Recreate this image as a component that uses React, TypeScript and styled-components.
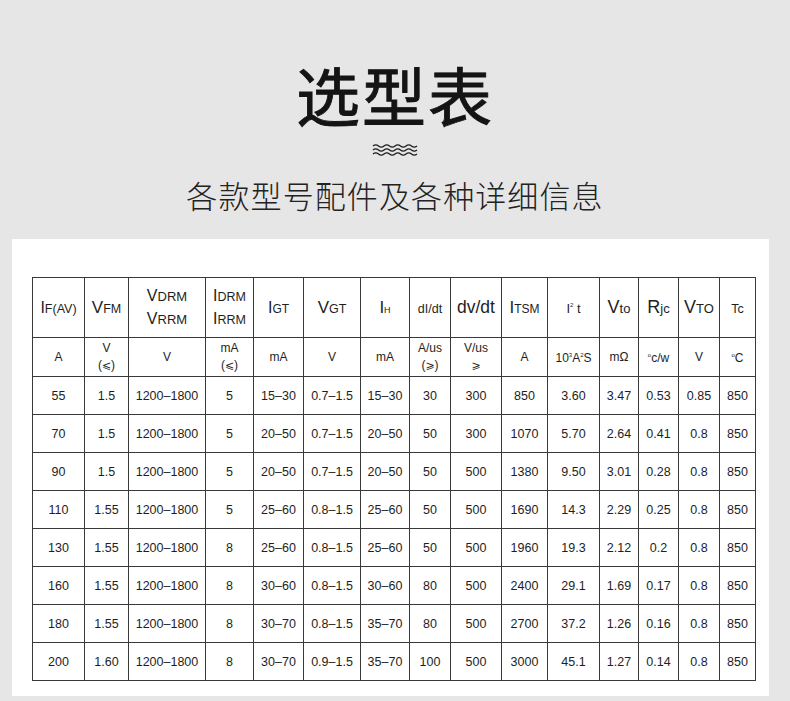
import React, { FC } from 'react';
import styled, { createGlobalStyle } from 'styled-components';

const GlobalStyle = createGlobalStyle`
  html, body {
    margin: 0;
    padding: 0;
    background: #e6e6e6;
  }
  body {
    font-family: "Liberation Sans", Arial, sans-serif;
    color: #1a1a1a;
  }
`;

const Page = styled.div`
  width: 790px;
  height: 701px;
  display: flex;
  flex-direction: column;
  align-items: flex-start;
  overflow: hidden;
`;

const Header = styled.header`
  width: 790px;
  display: flex;
  flex-direction: column;
  align-items: center;
  padding-top: 61px;
`;

const Title = styled.h1`
  margin: 0;
  font-family: "Noto Sans CJK SC", sans-serif;
  font-size: 64px;
  line-height: 64px;
  font-weight: 400;
  -webkit-text-stroke: 0.9px #141414;
  color: #141414;
  letter-spacing: 2px;
`;

const Waves = styled.svg`
  margin-top: 18px;
  display: block;
`;

const Subtitle = styled.div`
  margin-top: 22px;
  font-family: "Noto Sans CJK SC", sans-serif;
  font-size: 31px;
  line-height: 31px;
  font-weight: 300;
  letter-spacing: 1.1px;
  color: #222;
`;

const Panel = styled.section`
  margin: 29px 0 0 12px;
  width: 757px;
  background: #fff;
  padding: 38px 0 15px 20px;
  box-sizing: border-box;
`;

const Table = styled.table`
  width: 723px;
  border-collapse: collapse;
  table-layout: fixed;
  border: 1.5px solid #2e2e2e;

  td,
  th {
    border: 1px solid #3a3a3a;
    padding: 0;
    text-align: center;
    vertical-align: middle;
    color: #1e1e1e;
    font-weight: 400;
  }
`;

const HeadRow = styled.tr`
  height: 60px;
`;

const UnitRow = styled.tr`
  height: 39px;
  td {
    font-size: 12px;
    line-height: 17px;
  }
`;

const DataRow = styled.tr`
  height: 38px;
  td {
    font-size: 12.5px;
  }
`;

const Sym = styled.span<{ $big: number; $small?: number }>`
  font-size: ${(p) => p.$big}px;
  line-height: 1;
  small {
    font-size: ${(p) => p.$small ?? 11}px;
  }
`;

const Stack = styled.div`
  display: flex;
  flex-direction: column;
  align-items: center;
  gap: 7px;
`;

const Sup = styled.sup`
  font-size: 6px;
  vertical-align: 6px;
`;

const SupUnit = styled.sup`
  font-size: 6px;
  vertical-align: 5px;
`;

const Rel = styled.span`
  font-family: "DejaVu Sans", sans-serif;
  font-size: 11px;
`;

const widths = [52, 44, 77, 48, 50, 57, 49, 41, 51, 46, 52, 39, 40, 41, 36];

const rows = [
  ['55', '1.5', '1200–1800', '5', '15–30', '0.7–1.5', '15–30', '30', '300', '850', '3.60', '3.47', '0.53', '0.85', '850'],
  ['70', '1.5', '1200–1800', '5', '20–50', '0.7–1.5', '20–50', '50', '300', '1070', '5.70', '2.64', '0.41', '0.8', '850'],
  ['90', '1.5', '1200–1800', '5', '20–50', '0.7–1.5', '20–50', '50', '500', '1380', '9.50', '3.01', '0.28', '0.8', '850'],
  ['110', '1.55', '1200–1800', '5', '25–60', '0.8–1.5', '25–60', '50', '500', '1690', '14.3', '2.29', '0.25', '0.8', '850'],
  ['130', '1.55', '1200–1800', '8', '25–60', '0.8–1.5', '25–60', '50', '500', '1960', '19.3', '2.12', '0.2', '0.8', '850'],
  ['160', '1.55', '1200–1800', '8', '30–60', '0.8–1.5', '30–60', '80', '500', '2400', '29.1', '1.69', '0.17', '0.8', '850'],
  ['180', '1.55', '1200–1800', '8', '30–70', '0.8–1.5', '35–70', '80', '500', '2700', '37.2', '1.26', '0.16', '0.8', '850'],
  ['200', '1.60', '1200–1800', '8', '30–70', '0.9–1.5', '35–70', '100', '500', '3000', '45.1', '1.27', '0.14', '0.8', '850'],
];

const wavePath = (y: number) => {
  let d = `M1 ${y} Q3.75 ${y - 2.2} 6.5 ${y}`;
  for (let x = 12; x <= 45; x += 5.5) d += ` T${x} ${y}`;
  return d;
};

const App: FC = () => (
  <Page>
    <GlobalStyle />
    <Header>
      <Title>选型表</Title>
      <Waves width="46" height="14" viewBox="0 0 46 14">
        {[3, 7, 11].map((y) => (
          <path key={y} d={wavePath(y)} fill="none" stroke="#1c1c1c" strokeWidth="1.3" />
        ))}
      </Waves>
      <Subtitle>各款型号配件及各种详细信息</Subtitle>
    </Header>
    <Panel>
      <Table>
        <colgroup>
          {widths.map((w, i) => (
            <col key={i} style={{ width: w }} />
          ))}
        </colgroup>
        <thead>
          <HeadRow>
            <th>
              <Sym $big={16} $small={12.5}>I<small>F(AV)</small></Sym>
            </th>
            <th>
              <Sym $big={17} $small={12.5}>V<small>FM</small></Sym>
            </th>
            <th>
              <Stack>
                <Sym $big={16} $small={13}>V<small>DRM</small></Sym>
                <Sym $big={16} $small={13}>V<small>RRM</small></Sym>
              </Stack>
            </th>
            <th>
              <Stack>
                <Sym $big={16} $small={12.5}>I<small>DRM</small></Sym>
                <Sym $big={16} $small={12.5}>I<small>RRM</small></Sym>
              </Stack>
            </th>
            <th>
              <Sym $big={16} $small={12}>I<small>GT</small></Sym>
            </th>
            <th>
              <Sym $big={17} $small={12.5}>V<small>GT</small></Sym>
            </th>
            <th>
              <Sym $big={17} $small={9}>I<small>H</small></Sym>
            </th>
            <th>
              <Sym $big={12.5}>dI/dt</Sym>
            </th>
            <th>
              <Sym $big={17.5}>dv/dt</Sym>
            </th>
            <th>
              <Sym $big={17} $small={12}>I<small>TSM</small></Sym>
            </th>
            <th>
              <Sym $big={13}>
                I<Sup>2</Sup> t
              </Sym>
            </th>
            <th>
              <Sym $big={18} $small={13}>V<small>to</small></Sym>
            </th>
            <th>
              <Sym $big={18} $small={13}>R<small>jc</small></Sym>
            </th>
            <th>
              <Sym $big={18} $small={13}>V<small>TO</small></Sym>
            </th>
            <th>
              <Sym $big={12.5}>Tc</Sym>
            </th>
          </HeadRow>
        </thead>
        <tbody>
          <UnitRow>
            <td>A</td>
            <td>
              V<br />(<Rel>⩽</Rel>)
            </td>
            <td>V</td>
            <td>
              mA<br />(<Rel>⩽</Rel>)
            </td>
            <td>mA</td>
            <td>V</td>
            <td>mA</td>
            <td>
              A/us<br />(<Rel>⩾</Rel>)
            </td>
            <td>
              V/us<br /><Rel>⩾</Rel>
            </td>
            <td>A</td>
            <td>
              10<SupUnit>3</SupUnit>A<SupUnit>2</SupUnit>S
            </td>
            <td>mΩ</td>
            <td>
              <SupUnit>o</SupUnit>c/w
            </td>
            <td>V</td>
            <td>
              <SupUnit>o</SupUnit>C
            </td>
          </UnitRow>
          {rows.map((r) => (
            <DataRow key={r[0]}>
              {r.map((c, i) => (
                <td key={i}>{c}</td>
              ))}
            </DataRow>
          ))}
        </tbody>
      </Table>
    </Panel>
  </Page>
);

export default App;
